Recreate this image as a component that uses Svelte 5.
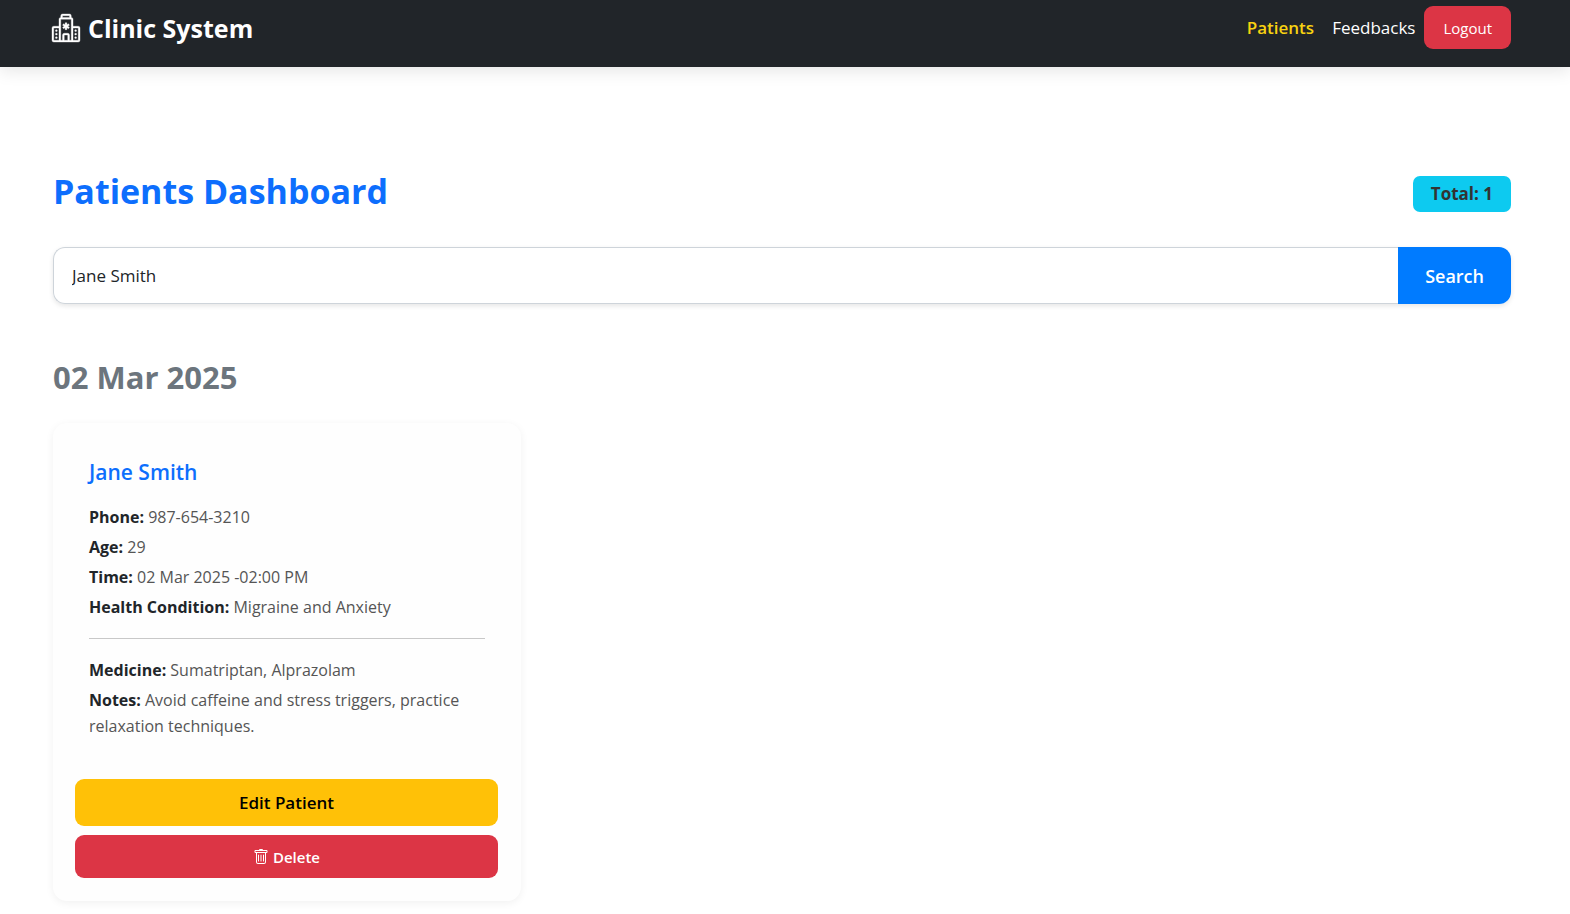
<script>
  let query = $state('Jane Smith');

  const groups = [
    {
      date: '02 Mar 2025',
      patients: [
        {
          name: 'Jane Smith',
          details: [
            ['Phone', '987-654-3210'],
            ['Age', '29'],
            ['Time', '02 Mar 2025 -02:00 PM'],
            ['Health Condition', 'Migraine and Anxiety']
          ],
          treatment: [
            ['Medicine', 'Sumatriptan, Alprazolam'],
            ['Notes', 'Avoid caffeine and stress triggers, practice relaxation techniques.']
          ]
        }
      ]
    }
  ];

  const total = groups.reduce((sum, group) => sum + group.patients.length, 0);
</script>

<header class="navbar">
  <a class="brand" href="#home">
    <svg width="28" height="28" viewBox="0 0 16 16" fill="currentColor" stroke="currentColor" stroke-width="0.2" aria-hidden="true">
      <path d="M8.5 5.034v1.1l.953-.55.5.867L9 7l.953.55-.5.866-.953-.55v1.1h-1v-1.1l-.953.55-.5-.866L7 7l-.953-.55.5-.866.953.55v-1.1zM13.25 9a.25.25 0 0 0-.25.25v.5c0 .138.112.25.25.25h.5a.25.25 0 0 0 .25-.25v-.5a.25.25 0 0 0-.25-.25zM13 11.25a.25.25 0 0 1 .25-.25h.5a.25.25 0 0 1 .25.25v.5a.25.25 0 0 1-.25.25h-.5a.25.25 0 0 1-.25-.25zm.25 1.75a.25.25 0 0 0-.25.25v.5c0 .138.112.25.25.25h.5a.25.25 0 0 0 .25-.25v-.5a.25.25 0 0 0-.25-.25zm-11-4a.25.25 0 0 0-.25.25v.5c0 .138.112.25.25.25h.5A.25.25 0 0 0 3 9.75v-.5A.25.25 0 0 0 2.75 9zm0 2a.25.25 0 0 0-.25.25v.5c0 .138.112.25.25.25h.5a.25.25 0 0 0 .25-.25v-.5a.25.25 0 0 0-.25-.25zM2 13.25a.25.25 0 0 1 .25-.25h.5a.25.25 0 0 1 .25.25v.5a.25.25 0 0 1-.25.25h-.5a.25.25 0 0 1-.25-.25z" />
      <path d="M5 1a1 1 0 0 1 1-1h4a1 1 0 0 1 1 1v1a1 1 0 0 1 1 1v4h3a1 1 0 0 1 1 1v7a1 1 0 0 1-1 1H1a1 1 0 0 1-1-1V8a1 1 0 0 1 1-1h3V3a1 1 0 0 1 1-1zm2 14h2v-3H7zm3 0h1V3H5v12h1v-3a1 1 0 0 1 1-1h2a1 1 0 0 1 1 1zm0-14H6v1h4zm2 7v7h3V8zm-8 7V8H1v7z" />
    </svg>
    <span>Clinic System</span>
  </a>
  <nav class="links">
    <a class="link active" href="#patients">Patients</a>
    <a class="link" href="#feedbacks">Feedbacks</a>
    <button class="btn danger logout" type="button">Logout</button>
  </nav>
</header>

<main class="page">
  <div class="heading">
    <h1>Patients Dashboard</h1>
    <span class="badge">Total: {total}</span>
  </div>

  <form class="search" onsubmit={(event) => event.preventDefault()}>
    <input type="text" aria-label="Search patients" bind:value={query} />
    <button type="submit">Search</button>
  </form>

  {#each groups as group}
    <section>
      <h2>{group.date}</h2>
      <div class="cards">
        {#each group.patients as patient}
          <article class="card">
            <div class="body">
              <h3>{patient.name}</h3>
              {#each patient.details as [label, value]}
                <p><strong>{label}:</strong> {value}</p>
              {/each}
              <hr />
              {#each patient.treatment as [label, value]}
                <p><strong>{label}:</strong> {value}</p>
              {/each}
            </div>
            <div class="actions">
              <button class="btn warning" type="button">Edit Patient</button>
              <button class="btn danger delete" type="button">
                <svg width="16" height="16" viewBox="0 0 16 16" fill="currentColor" aria-hidden="true">
                  <path d="M5.5 5.5A.5.5 0 0 1 6 6v6a.5.5 0 0 1-1 0V6a.5.5 0 0 1 .5-.5m2.5 0a.5.5 0 0 1 .5.5v6a.5.5 0 0 1-1 0V6a.5.5 0 0 1 .5-.5m3 .5a.5.5 0 0 0-1 0v6a.5.5 0 0 0 1 0z" />
                  <path d="M14.5 3a1 1 0 0 1-1 1H13v9a2 2 0 0 1-2 2H5a2 2 0 0 1-2-2V4h-.5a1 1 0 0 1-1-1V2a1 1 0 0 1 1-1H6a1 1 0 0 1 1-1h2a1 1 0 0 1 1 1h3.5a1 1 0 0 1 1 1zM4.118 4 4 4.059V13a1 1 0 0 0 1 1h6a1 1 0 0 0 1-1V4.059L11.882 4zM2.5 3h11V2h-11z" />
                </svg>
                Delete
              </button>
            </div>
          </article>
        {/each}
      </div>
    </section>
  {/each}
</main>

<style>
  :global(body) {
    background: #fff;
    color: #333;
    font-family: 'Open Sans', 'Noto Sans', sans-serif;
    font-size: 16px;
    line-height: 26px;
  }

  :global(*) {
    box-sizing: border-box;
  }

  button,
  input {
    font-family: inherit;
  }

  a {
    text-decoration: none;
  }

  .navbar {
    display: flex;
    align-items: flex-start;
    justify-content: space-between;
    padding: 6px 59px 18px 52px;
    background: #212529;
    box-shadow: 0 4px 16px rgba(0, 0, 0, 0.1);
  }

  .brand {
    display: flex;
    align-items: center;
    gap: 8px;
    height: 43px;
    color: #fff;
    font-size: 25px;
    font-weight: 700;
  }

  .brand svg {
    overflow: visible;
  }

  .links {
    display: flex;
    align-items: center;
  }

  .link {
    padding: 0 9px;
    color: #fff;
    font-size: 17px;
  }

  .link.active {
    color: #f8d210;
    font-weight: 600;
  }

  .btn {
    display: flex;
    align-items: center;
    justify-content: center;
    border: 0;
    border-radius: 9px;
    cursor: pointer;
  }

  .danger {
    height: 43px;
    background: #dc3545;
    color: #fff;
    font-size: 15px;
  }

  .logout {
    padding: 0 19px;
  }

  .delete {
    gap: 4px;
    font-weight: 600;
  }

  .warning {
    height: 47px;
    background: #ffc107;
    color: #000;
    font-size: 17px;
    font-weight: 600;
  }

  .page {
    padding: 97px 59px 13px 53px;
  }

  .heading {
    display: flex;
    align-items: center;
    justify-content: space-between;
    margin-bottom: 29px;
  }

  h1 {
    margin: 0;
    color: #0d6efd;
    font-size: 34px;
    font-weight: 700;
    line-height: 54px;
  }

  .badge {
    margin-top: 6px;
    padding: 5px 18px;
    border-radius: 7px;
    background: #0dcaf0;
    font-size: 17px;
    font-weight: 700;
  }

  .search {
    display: flex;
    height: 57px;
    border-radius: 12px;
    box-shadow: 0 2px 5px rgba(0, 0, 0, 0.1);
  }

  .search input {
    flex: 1;
    min-width: 0;
    padding: 0 18px;
    border: 1px solid #ced4da;
    border-right: 0;
    border-radius: 12px 0 0 12px;
    outline: 0;
    background: #fff;
    color: #212529;
    font-size: 17px;
  }

  .search button {
    padding: 0 27px;
    border: 0;
    border-radius: 0 12px 12px 0;
    background: #007bff;
    color: #fff;
    font-size: 18px;
    font-weight: 600;
    cursor: pointer;
  }

  h2 {
    margin: 53px 0 26px;
    color: #6c757d;
    font-size: 31px;
    font-weight: 700;
    line-height: 40px;
  }

  .cards {
    display: grid;
    grid-template-columns: repeat(auto-fill, minmax(400px, 1fr));
    gap: 27px;
  }

  .card {
    padding: 22px 23px 23px 22px;
    border-radius: 14px;
    background: #fefefe;
    box-shadow: 0 2px 8px rgba(0, 0, 0, 0.06);
  }

  .body {
    padding: 12px 13px 36px 14px;
  }

  h3 {
    margin: 0 0 17px;
    color: #0d6efd;
    font-size: 21px;
    font-weight: 600;
    line-height: 30px;
  }

  p {
    margin: 0 0 4px;
    color: #555;
  }

  strong {
    color: #212529;
    font-weight: 700;
  }

  hr {
    margin: 18px 0;
    border: 0;
    border-top: 1px solid #c8c8c8;
  }

  .actions {
    display: grid;
    gap: 9px;
  }
</style>
